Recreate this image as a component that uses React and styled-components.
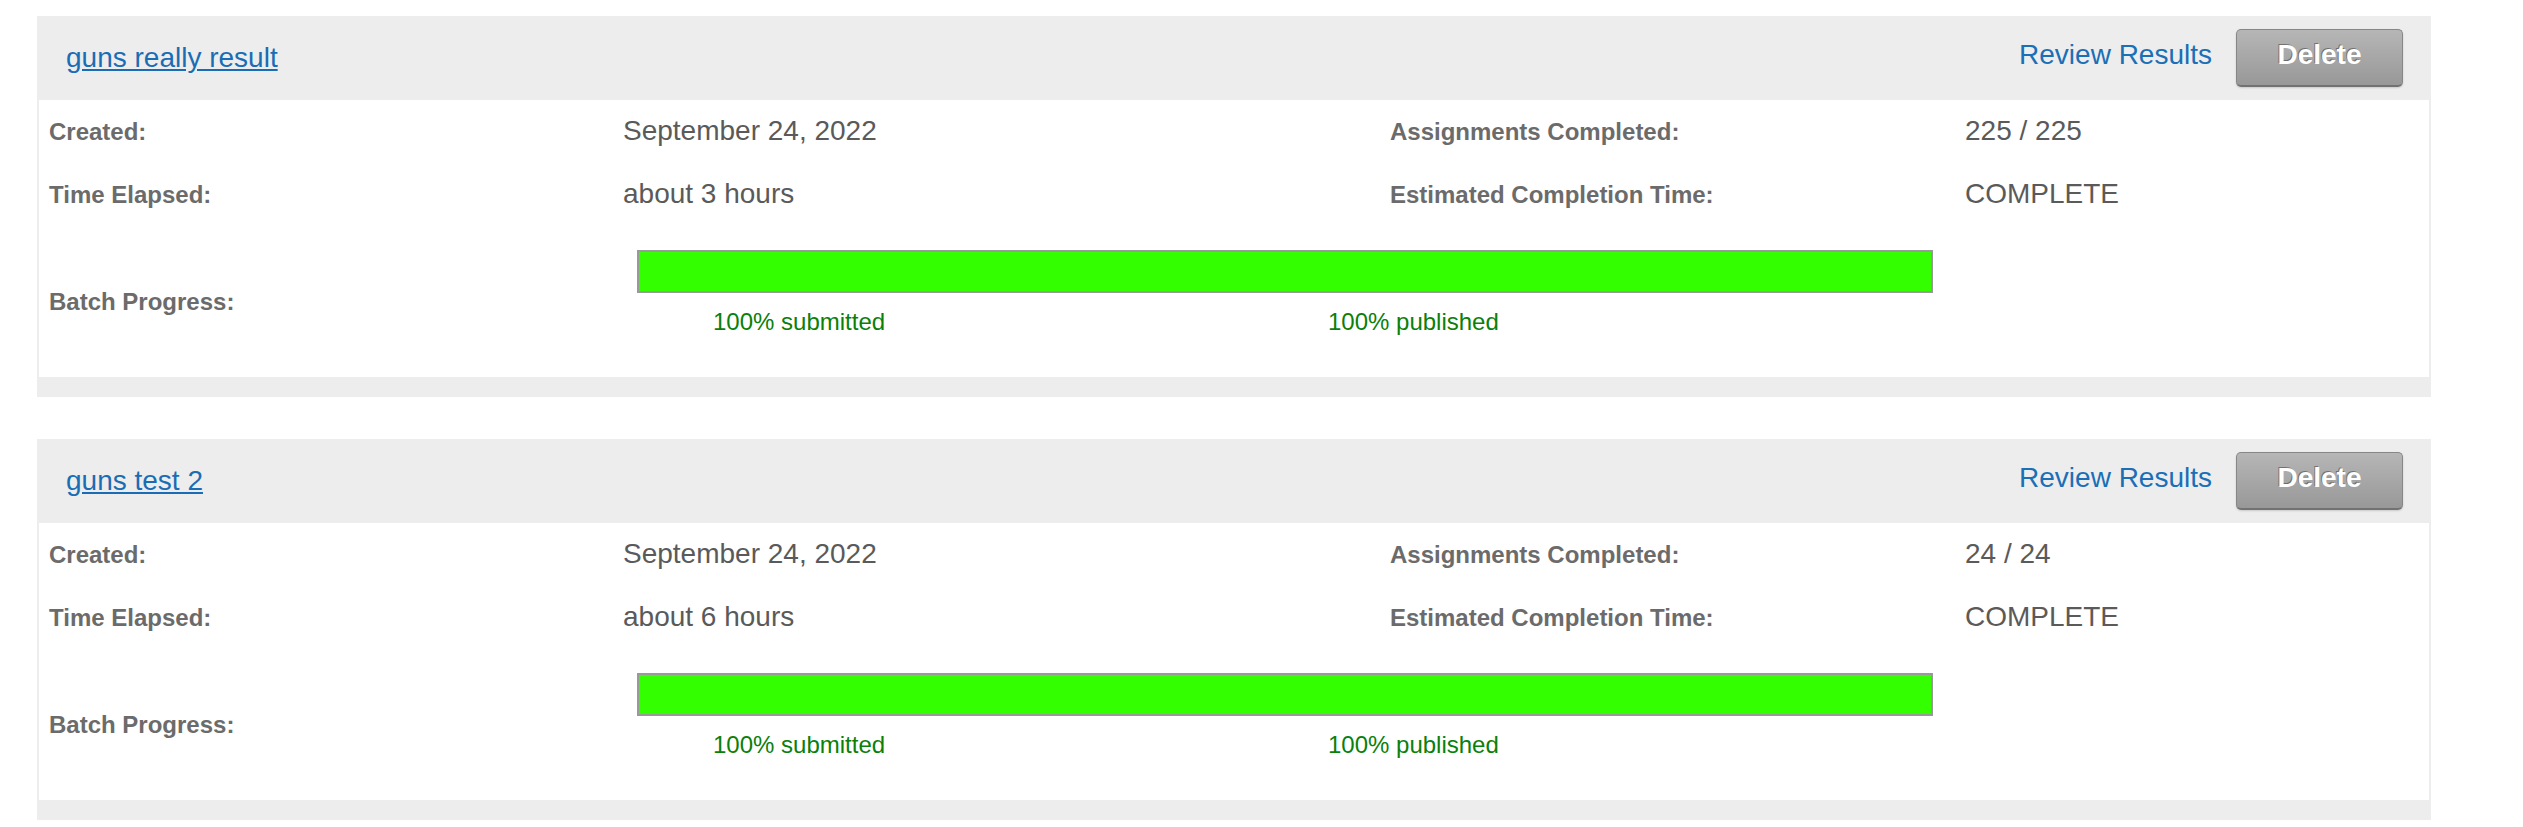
import styled, { createGlobalStyle } from "styled-components";

const GlobalStyle = createGlobalStyle`
  html, body {
    margin: 0;
    padding: 0;
    background: #ffffff;
  }
  body {
    font-family: "Liberation Sans", Arial, sans-serif;
  }
`;

const Page = styled.div`
  display: flex;
  flex-direction: column;
  gap: 42px;
  padding: 16px 92px 0 37px;
`;

const Panel = styled.section`
  display: flex;
  flex-direction: column;
  background: #ededed;
  padding: 0 2px 20px;
`;

const PanelHeader = styled.header`
  display: flex;
  align-items: center;
  justify-content: space-between;
  height: 84px;
  padding: 0 26px 0 27px;
`;

const Title = styled.a`
  font-size: 28px;
  color: #1a6db4;
  text-decoration: underline;
  text-underline-offset: 2px;
  cursor: pointer;
`;

const Actions = styled.div`
  display: flex;
  align-items: center;
  gap: 24px;
`;

const ReviewLink = styled.a`
  font-size: 28px;
  color: #1a6fb6;
  text-decoration: none;
  margin-bottom: 6px;
  cursor: pointer;
`;

const DeleteButton = styled.button`
  box-sizing: border-box;
  width: 167px;
  height: 58px;
  padding: 0 0 5px;
  font-family: "Liberation Sans", Arial, sans-serif;
  font-size: 28px;
  font-weight: bold;
  color: #ffffff;
  text-shadow: -1px -1px 0 rgba(0, 0, 0, 0.35);
  background: linear-gradient(to bottom, #b6b6b6, #989898);
  border: 1px solid #878787;
  border-bottom: 2px solid #727272;
  border-radius: 5px;
  box-shadow: 0 1px 2px rgba(0, 0, 0, 0.15);
  cursor: pointer;
`;

const Details = styled.div`
  display: grid;
  grid-template-columns: 584px 767px 575px 1fr;
  grid-template-rows: 63px 63px 151px;
  background: #ffffff;
`;

const Label = styled.div`
  align-self: center;
  padding-left: ${(p) => (p.$first ? "10px" : "0")};
  font-size: 24px;
  font-weight: bold;
  color: #6b6b6b;
`;

const Value = styled.div`
  align-self: center;
  margin-top: -2px;
  font-size: 28px;
  color: #5a5a5a;
`;

const ProgressCell = styled.div`
  grid-column: 2 / span 2;
  align-self: start;
  padding: 24px 32px 0 14px;
`;

const Bar = styled.div`
  box-sizing: border-box;
  height: 43px;
  border: 2px solid #999999;
  background: #e6e6e6;
`;

const BarFill = styled.div`
  height: 100%;
  background: #33ff00;
`;

const Legend = styled.div`
  display: grid;
  grid-template-columns: 615px auto;
  padding-left: 76px;
  margin-top: 15px;
  font-size: 24px;
  color: #0a800a;
`;

const batches = [
  {
    name: "guns really result",
    created: "September 24, 2022",
    elapsed: "about 3 hours",
    done: 225,
    total: 225,
    eta: "COMPLETE",
    submitted: 100,
    published: 100,
  },
  {
    name: "guns test 2",
    created: "September 24, 2022",
    elapsed: "about 6 hours",
    done: 24,
    total: 24,
    eta: "COMPLETE",
    submitted: 100,
    published: 100,
  },
];

const BatchPanel = ({ batch }) => (
  <Panel>
    <PanelHeader>
      <Title>{batch.name}</Title>
      <Actions>
        <ReviewLink>Review Results</ReviewLink>
        <DeleteButton>Delete</DeleteButton>
      </Actions>
    </PanelHeader>
    <Details>
      <Label $first>Created:</Label>
      <Value>{batch.created}</Value>
      <Label>Assignments Completed:</Label>
      <Value>
        {batch.done} / {batch.total}
      </Value>

      <Label $first>Time Elapsed:</Label>
      <Value>{batch.elapsed}</Value>
      <Label>Estimated Completion Time:</Label>
      <Value>{batch.eta}</Value>

      <Label $first>Batch Progress:</Label>
      <ProgressCell>
        <Bar>
          <BarFill style={{ width: `${batch.submitted}%` }} />
        </Bar>
        <Legend>
          <span>{batch.submitted}% submitted</span>
          <span>{batch.published}% published</span>
        </Legend>
      </ProgressCell>
    </Details>
  </Panel>
);

export default function App() {
  return (
    <>
      <GlobalStyle />
      <Page>
        {batches.map((b) => (
          <BatchPanel key={b.name} batch={b} />
        ))}
      </Page>
    </>
  );
}
